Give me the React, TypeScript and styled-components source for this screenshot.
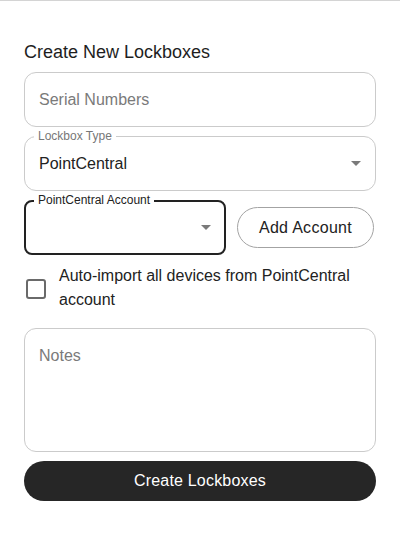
import React from "react";
import styled, { createGlobalStyle } from "styled-components";

const Global = createGlobalStyle`
  html, body { margin: 0; padding: 0; background: #fff; }
  body { font-family: "Liberation Sans", Arial, sans-serif; color: #222; }
  * { box-sizing: border-box; }
`;

const Page = styled.div`
  border-top: 1px solid #d4d4d4;
  padding: 41px 24px 0 24px;
  width: 400px;
  min-height: 546px;
  background: #fff;
`;

const Title = styled.h2`
  margin: 0 0 10px 0;
  font-size: 18px;
  line-height: 20px;
  font-weight: 400;
  color: #1e1e1e;
`;

const Form = styled.form`
  display: flex;
  flex-direction: column;
`;

const Field = styled.div<{ $mt?: number; $focused?: boolean; $width?: string }>`
  position: relative;
  height: 55px;
  width: ${(p) => p.$width ?? "100%"};
  margin-top: ${(p) => p.$mt ?? 0}px;
  border: ${(p) => (p.$focused ? "2px solid #222" : "1px solid #cbcbcb")};
  border-radius: ${(p) => (p.$focused ? "8px" : "12px")};
  display: flex;
  align-items: center;
  padding: 0 ${(p) => (p.$focused ? 13 : 14)}px;
`;

const TextInput = styled.input`
  border: none;
  outline: none;
  width: 100%;
  font: inherit;
  font-size: 16px;
  color: #222;
  background: transparent;
  padding: 0;
  &::placeholder { color: #7a7a7a; }
`;

const FloatLabel = styled.span<{ $dark?: boolean }>`
  position: absolute;
  top: ${(p) => (p.$dark ? -9 : -8)}px;
  left: ${(p) => (p.$dark ? 8 : 9)}px;
  padding: 0 4px;
  background: #fff;
  font-size: 12px;
  line-height: 14px;
  color: ${(p) => (p.$dark ? "#222" : "#777")};
`;

const SelectValue = styled.span`
  flex: 1;
  font-size: 16px;
  line-height: 20px;
  color: #222;
`;

const Caret = styled.svg`
  width: 10px;
  height: 5px;
  flex: none;
`;

const AccountRow = styled.div`
  display: flex;
  align-items: center;
  gap: 11px;
  margin-top: 9px;
`;

const OutlineButton = styled.button`
  flex: 1;
  height: 41px;
  border: 1px solid #a3a3a3;
  border-radius: 21px;
  background: #fff;
  font: inherit;
  font-size: 16px;
  letter-spacing: 0.3px;
  color: #222;
  margin-right: 2px;
  cursor: pointer;
`;

const CheckRow = styled.label`
  display: flex;
  align-items: center;
  gap: 13px;
  margin-top: 9px;
  padding-left: 2px;
`;

const Box = styled.span`
  width: 20px;
  height: 20px;
  border: 2px solid #6a6a6a;
  border-radius: 3px;
  flex: none;
  margin-top: 1px;
`;

const CheckText = styled.span`
  font-size: 16px;
  line-height: 24px;
  color: #222;
`;

const NotesBox = styled.div`
  margin-top: 16px;
  height: 124px;
  border: 1px solid #cbcbcb;
  border-radius: 12px;
  padding: 17px 14px;
`;

const NotesInput = styled.textarea`
  border: none;
  outline: none;
  resize: none;
  width: 100%;
  height: 100%;
  font: inherit;
  font-size: 16px;
  line-height: 20px;
  padding: 0;
  color: #222;
  &::placeholder { color: #7a7a7a; }
`;

const PrimaryButton = styled.button`
  margin-top: 9px;
  height: 40px;
  width: 100%;
  border: none;
  border-radius: 20px;
  background: #262626;
  color: #fff;
  font: inherit;
  font-size: 16px;
  letter-spacing: 0.2px;
  cursor: pointer;
`;

const CaretIcon = () => (
  <Caret viewBox="0 0 10 5">
    <path d="M0 0 L10 0 L5 5 Z" fill="#7a7a7a" />
  </Caret>
);

export default function App() {
  return (
    <>
      <Global />
      <Page>
        <Title>Create New Lockboxes</Title>
        <Form onSubmit={(e) => e.preventDefault()}>
          <Field>
            <TextInput placeholder="Serial Numbers" />
          </Field>
          <Field $mt={9}>
            <FloatLabel>Lockbox Type</FloatLabel>
            <SelectValue>PointCentral</SelectValue>
            <CaretIcon />
          </Field>
          <AccountRow>
            <Field $focused $width="202px">
              <FloatLabel $dark>PointCentral Account</FloatLabel>
              <SelectValue />
              <CaretIcon />
            </Field>
            <OutlineButton type="button">Add Account</OutlineButton>
          </AccountRow>
          <CheckRow>
            <Box />
            <CheckText>Auto-import all devices from PointCentral account</CheckText>
          </CheckRow>
          <NotesBox>
            <NotesInput placeholder="Notes" />
          </NotesBox>
          <PrimaryButton type="submit">Create Lockboxes</PrimaryButton>
        </Form>
      </Page>
    </>
  );
}
